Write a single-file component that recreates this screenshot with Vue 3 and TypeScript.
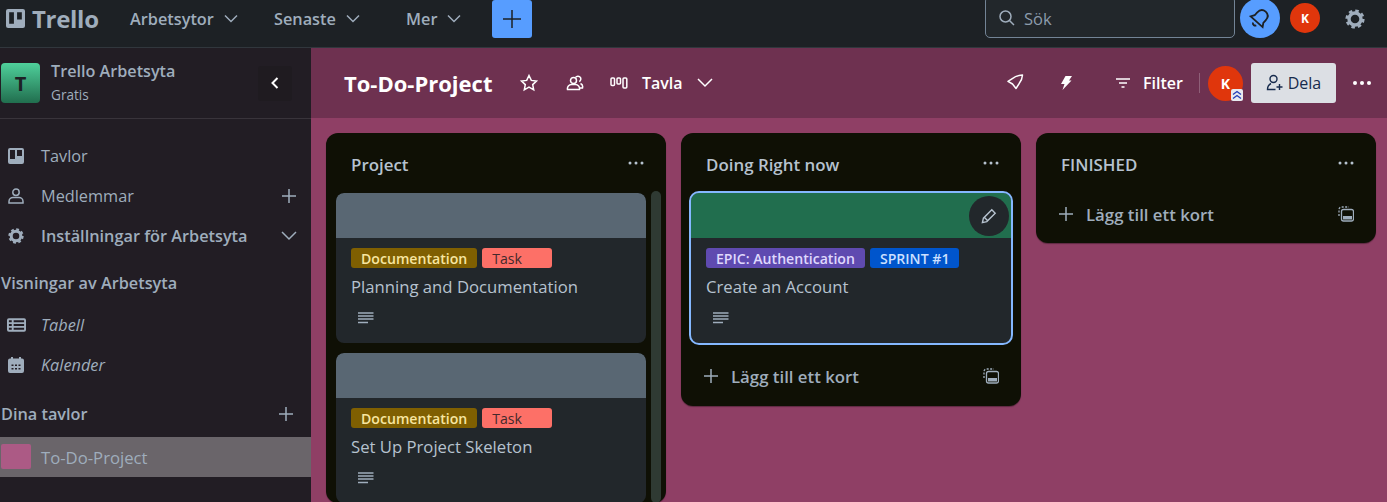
<script setup lang="ts">
interface Label {
  text: string
  kind: string
}

interface Card {
  title: string
  cover: string
  labels: Label[]
  active?: boolean
}

interface List {
  name: string
  cards: Card[]
  scroll?: boolean
  addRow: boolean
}

const lists: List[] = [
  {
    name: 'Project',
    scroll: true,
    addRow: false,
    cards: [
      {
        title: 'Planning and Documentation',
        cover: 'cover-grey',
        labels: [
          { text: 'Documentation', kind: 'docs' },
          { text: 'Task', kind: 'task' },
        ],
      },
      {
        title: 'Set Up Project Skeleton',
        cover: 'cover-grey',
        labels: [
          { text: 'Documentation', kind: 'docs' },
          { text: 'Task', kind: 'task' },
        ],
      },
    ],
  },
  {
    name: 'Doing Right now',
    addRow: true,
    cards: [
      {
        title: 'Create an Account',
        cover: 'cover-green',
        active: true,
        labels: [
          { text: 'EPIC: Authentication', kind: 'epic' },
          { text: 'SPRINT #1', kind: 'sprint' },
        ],
      },
    ],
  },
  { name: 'FINISHED', addRow: true, cards: [] },
]
</script>

<template>
  <div class="app">
    <header class="topbar">
      <div class="logo">
        <svg class="logo-mark" width="19" height="19" viewBox="0 0 18 18">
          <path fill-rule="evenodd" fill="#9fadbc" d="M2 0h14a2 2 0 0 1 2 2v14a2 2 0 0 1-2 2H2a2 2 0 0 1-2-2V2a2 2 0 0 1 2-2zm1 3v11h4.500V3zm7.500 0v7H15V3z" />
        </svg>
        <span>Trello</span>
      </div>
      <button class="menu menu-a">Arbetsytor
        <svg width="14" height="10" viewBox="0 0 14 10"><path d="M1 1.500l6 6 6-6" /></svg>
      </button>
      <button class="menu menu-b">Senaste
        <svg width="14" height="10" viewBox="0 0 14 10"><path d="M1 1.500l6 6 6-6" /></svg>
      </button>
      <button class="menu menu-c">Mer
        <svg width="14" height="10" viewBox="0 0 14 10"><path d="M1 1.500l6 6 6-6" /></svg>
      </button>
      <button class="create">
        <svg width="20" height="20" viewBox="0 0 20 20"><path d="M10 1v18M1 10h18" /></svg>
      </button>
      <div class="search">
        <svg width="18" height="18" viewBox="0 0 18 18"><circle cx="7.500" cy="7.500" r="5.500" /><path d="M11.500 11.500L16 16" /></svg>
        <span>Sök</span>
      </div>
      <button class="bell">
        <svg width="24" height="24" viewBox="0 0 24 24">
          <g transform="rotate(42 12 12)">
            <path d="M12 3.500c-3.800 0-5.800 2.800-5.800 6.500v3.500L4 17h16l-2.200-3.500V10c0-3.700-2-6.500-5.800-6.500z" />
            <path d="M9.800 20a2.400 2.400 0 0 0 4.400 0" />
          </g>
        </svg>
      </button>
      <div class="avatar avatar-top">K</div>
      <svg class="gear" width="20" height="20" viewBox="0 0 20 20">
        <circle cx="10" cy="10" r="6" fill="none" stroke="#9fadbc" stroke-width="3.400" />
        <circle cx="10" cy="10" r="8.300" fill="none" stroke="#9fadbc" stroke-width="2.600" stroke-dasharray="3.500 3.020" />
      </svg>
    </header>

    <div class="body">
      <aside class="sidebar">
        <div class="workspace">
          <div class="ws-logo">T</div>
          <div class="ws-text">
            <div class="ws-name">Trello Arbetsyta</div>
            <div class="ws-plan">Gratis</div>
          </div>
          <button class="collapse">
            <svg width="10" height="14" viewBox="0 0 10 14"><path d="M7.500 2L2.500 7l5 5" /></svg>
          </button>
        </div>

        <nav class="nav">
          <div class="row">
            <svg class="row-icon" width="16" height="16" viewBox="0 0 16 16">
              <path fill="#9fadbc" fill-rule="evenodd" d="M2 0h12a2 2 0 0 1 2 2v12a2 2 0 0 1-2 2H2a2 2 0 0 1-2-2V2a2 2 0 0 1 2-2zm0 2v9h5V2zm7 0v6h5V2z" />
            </svg>
            <span>Tavlor</span>
          </div>
          <div class="row">
            <svg class="row-icon line" width="16" height="16" viewBox="0 0 16 16">
              <circle cx="8" cy="4.200" r="3.200" />
              <path d="M1 15v-1.500c0-2.500 2-4 4-4h6c2 0 4 1.500 4 4V15z" />
            </svg>
            <span>Medlemmar</span>
            <svg class="row-end line" width="16" height="16" viewBox="0 0 16 16"><path d="M8 1v14M1 8h14" /></svg>
          </div>
          <div class="row strong">
            <svg class="row-icon" width="16" height="16" viewBox="0 0 20 20">
              <circle cx="10" cy="10" r="6" fill="none" stroke="#9fadbc" stroke-width="3.800" />
              <circle cx="10" cy="10" r="8.300" fill="none" stroke="#9fadbc" stroke-width="2.600" stroke-dasharray="3.500 3.020" />
            </svg>
            <span>Inställningar för Arbetsyta</span>
            <svg class="row-end line" width="16" height="16" viewBox="0 0 16 16"><path d="M1 4l7 7 7-7" /></svg>
          </div>

          <div class="heading views">Visningar av Arbetsyta</div>
          <div class="row italic">
            <svg class="row-icon row-icon-wide" width="19" height="14" viewBox="0 0 20 14">
              <path fill="#9fadbc" fill-rule="evenodd" d="M2 0h16a2 2 0 0 1 2 2v10a2 2 0 0 1-2 2H2a2 2 0 0 1-2-2V2a2 2 0 0 1 2-2zm0 2v2h3V2zm5 0v2h11V2zM2 6v2h3V6zm5 0v2h11V6zM2 10v2h3v-2zm5 0v2h11v-2z" />
            </svg>
            <span>Tabell</span>
          </div>
          <div class="row italic">
            <svg class="row-icon" width="16" height="16" viewBox="0 0 16 16">
              <path fill="#9fadbc" fill-rule="evenodd" d="M3 0h2v1.500h6V0h2v1.500h1a2 2 0 0 1 2 2V14a2 2 0 0 1-2 2H2a2 2 0 0 1-2-2V3.500a2 2 0 0 1 2-2h1zM3.500 7.500v1.500h2V7.500zm3.500 0v1.500h2V7.500zm3.500 0v1.500h2V7.500zm-7 3.500v1.500h2V11zm3.500 0v1.500h2V11zm3.500 0v1.500h2V11z" />
            </svg>
            <span>Kalender</span>
          </div>

          <div class="heading boards">
            <span>Dina tavlor</span>
            <svg class="row-end line" width="16" height="16" viewBox="0 0 16 16"><path d="M8 1v14M1 8h14" /></svg>
          </div>
          <div class="row board-row">
            <span class="swatch"></span>
            <span>To-Do-Project</span>
          </div>
        </nav>
      </aside>

      <main class="board">
        <div class="board-bar">
          <h1 class="board-title">To-Do-Project</h1>
          <svg class="bar-star bar-line" width="20" height="20" viewBox="0 0 20 20">
            <path d="M10 2.500l2.300 4.900 5.200.6-3.800 3.600 1 5.200L10 14.200l-4.700 2.600 1-5.200L2.500 8l5.200-.6z" />
          </svg>
          <svg class="bar-people bar-line" width="18" height="18" viewBox="0 0 18 18">
            <circle cx="7.500" cy="6.500" r="3" />
            <path d="M1.500 15.500c-.5-2.800 1.500-5 4-5h4c2.500 0 4.500 2.200 4 5zM9.500 3.500c1-1.800 4-1.800 5 .2.800 1.600-.2 3.300-1.300 3.800M14.500 9.500c1.700.8 2.500 2.500 2 4.500h-2.500" />
          </svg>
          <svg class="bar-view bar-line bar-view-icon" width="18" height="12" viewBox="0 0 18 12">
            <rect x="1" y="1" width="3.500" height="7.500" rx="1" />
            <rect x="7" y="1" width="3.500" height="6" rx="1" />
            <rect x="13" y="1" width="3.800" height="10" rx="1" />
          </svg>
          <span class="bar-tab">Tavla</span>
          <svg class="bar-chevron" width="18" height="12" viewBox="0 0 18 12"><path d="M2 2l7 7 7-7" /></svg>

          <svg class="bar-rocket bar-line" width="18" height="18" viewBox="0 0 18 18">
            <path d="M15.500 1c-3.500.3-6.500 1-9 2.800L1 7.300l4.500 2.700 3.500 4.500 3.300-5.200c2-2.500 3-5.300 3.200-8.300z" stroke-linejoin="round" />
          </svg>
          <svg class="bar-bolt" width="12" height="14" viewBox="0 0 12 14">
            <path fill="#fff" d="M5.500 0H12L9 4.500h2.500L2.500 14l2-6H1z" />
          </svg>
          <svg class="bar-filter bar-line" width="14" height="12" viewBox="0 0 14 12"><path d="M0 2h14M3 6h8M5.500 10h3" /></svg>
          <span class="bar-text">Filter</span>
          <span class="bar-divider"></span>
          <div class="avatar avatar-board">K
            <svg class="badge" width="12" height="12" viewBox="0 0 12 12">
              <rect width="12" height="12" rx="2" fill="#e8eaf0" />
              <path d="M2 5.500L6 2.500l4 3M2 9.500l4-3 4 3" fill="none" stroke="#2540b8" stroke-width="1.400" />
            </svg>
          </div>
          <button class="share">
            <svg width="18" height="18" viewBox="0 0 18 18">
              <circle cx="7.500" cy="5" r="3.500" />
              <path d="M5 9.500c-2 1-3.500 3.500-3.500 6h8M13.500 10v6M10.500 13h6" />
            </svg>
            Dela
          </button>
          <svg class="bar-more" width="20" height="6" viewBox="0 0 20 6">
            <circle cx="3" cy="3" r="2" /><circle cx="10" cy="3" r="2" /><circle cx="17" cy="3" r="2" />
          </svg>
        </div>

        <div class="canvas">
          <section v-for="list in lists" :key="list.name" class="list" :class="{ 'list-tall': list.scroll }">
            <div class="list-head">
              <span>{{ list.name }}</span>
              <svg width="18" height="6" viewBox="0 0 18 6">
                <circle cx="3" cy="3" r="1.500" /><circle cx="9" cy="3" r="1.500" /><circle cx="15" cy="3" r="1.500" />
              </svg>
            </div>
            <div v-if="list.cards.length" class="list-body">
              <div class="cards">
                <article v-for="card in list.cards" :key="card.title" class="card" :class="{ active: card.active }">
                  <div class="cover" :class="card.cover"></div>
                  <button v-if="card.active" class="edit">
                    <svg width="16" height="16" viewBox="0 0 16 16">
                      <path d="M10.800 1.800l3.400 3.400-8.400 8.400-4.400 1 1-4.400zM3.500 9.500l3 3" />
                    </svg>
                  </button>
                  <div class="card-body">
                    <div class="labels">
                      <span v-for="label in card.labels" :key="label.text" class="label" :class="label.kind">{{ label.text }}</span>
                    </div>
                    <div class="card-title">{{ card.title }}</div>
                    <svg class="desc" width="16" height="12" viewBox="0 0 16 12">
                      <path d="M0 1h15.500M0 4h15.500M0 7h15.500M0 10.500h10" />
                    </svg>
                  </div>
                </article>
              </div>
              <div v-if="list.scroll" class="scrollbar"></div>
            </div>
            <div v-if="list.addRow" class="add-row">
              <svg class="add-plus" width="16" height="16" viewBox="0 0 16 16"><path d="M8 1v14M1 8h14" /></svg>
              <span>Lägg till ett kort</span>
              <svg class="add-tpl" width="16" height="16" viewBox="0 0 16 16">
                <path d="M1 10V3.500A2.500 2.500 0 0 1 3.500 1H11" stroke-dasharray="2 1.500" />
                <rect x="3.500" y="3.500" width="12" height="11.500" rx="2" />
                <rect x="5" y="10" width="9" height="3.500" fill="#9fadbc" stroke="none" />
              </svg>
            </div>
          </section>
        </div>
      </main>
    </div>
  </div>
</template>

<style>
html,
body {
  margin: 0;
  overflow: hidden;
  background: #1d2125;
}
</style>

<style scoped>
.app {
  width: 1387px;
  height: 502px;
  display: flex;
  flex-direction: column;
  overflow: hidden;
  font-family: "Open Sans", "Noto Sans", sans-serif;
  color: #9fadbc;
}

button {
  font-family: inherit;
  border: none;
  padding: 0;
  background: none;
  color: inherit;
}

.topbar {
  box-sizing: border-box;
  flex: none;
  height: 48px;
  padding-bottom: 10px;
  display: flex;
  align-items: center;
  background: #1d2125;
  border-bottom: 1px solid #31373d;
  overflow: hidden;
}

.logo {
  width: 130px;
  padding-left: 6px;
  box-sizing: border-box;
  flex: none;
  display: flex;
  align-items: center;
  gap: 7px;
  font-size: 24px;
  font-weight: 700;
  letter-spacing: -0.3px;
}

.menu {
  display: flex;
  align-items: center;
  flex: none;
  gap: 10px;
  font-size: 16.300px;
  font-weight: 600;
  color: #9fadbc;
}

.menu svg,
.bar-chevron {
  fill: none;
  stroke: currentColor;
  stroke-width: 1.500;
}

.menu-a {
  width: 144px;
}

.menu-b {
  width: 132px;
}

.menu-c {
  width: 86px;
}

.create {
  width: 40px;
  height: 38px;
  flex: none;
  display: flex;
  align-items: center;
  justify-content: center;
  background: #579dff;
  border-radius: 3px;
}

.create svg {
  stroke: #1d2125;
  stroke-width: 1.500;
}

.search {
  box-sizing: border-box;
  width: 250px;
  height: 42px;
  margin-top: -4px;
  margin-left: auto;
  flex: none;
  display: flex;
  align-items: center;
  gap: 8px;
  padding: 3px 0 0 12px;
  background: #22272b;
  border: 1px solid #738496;
  border-radius: 5px;
  font-size: 16.500px;
  color: #8c9bab;
}

.search svg {
  fill: none;
  stroke: #9fadbc;
  stroke-width: 1.500;
}

.bell {
  width: 40px;
  height: 40px;
  margin-top: -2px;
  margin-left: 5px;
  flex: none;
  display: flex;
  align-items: center;
  justify-content: center;
  background: #579dff;
  border-radius: 50%;
}

.bell svg {
  fill: none;
  stroke: #1d2125;
  stroke-width: 1.800;
}

.avatar {
  flex: none;
  display: flex;
  align-items: center;
  justify-content: center;
  background: #e0360c;
  color: #fff;
  border-radius: 50%;
  font-weight: 700;
}

.avatar-top {
  width: 30px;
  height: 30px;
  margin-top: -1px;
  margin-left: 10px;
  font-size: 12px;
}

.gear {
  margin-left: 25px;
  margin-right: 22px;
  flex: none;
}

.body {
  flex: 1;
  min-height: 0;
  display: flex;
}

.sidebar {
  width: 311px;
  flex: none;
  background: #221d24;
}

.workspace {
  box-sizing: border-box;
  height: 71px;
  display: flex;
  align-items: center;
  padding-left: 1px;
  border-bottom: 1px solid #39343b;
}

.ws-logo {
  width: 39px;
  height: 40px;
  flex: none;
  display: flex;
  align-items: center;
  justify-content: center;
  border-radius: 4px;
  background: linear-gradient(#4fd09b, #216e4e);
  color: #1d2125;
  font-size: 20px;
  font-weight: 700;
}

.ws-text {
  margin-left: 11px;
  flex: 1;
}

.ws-name {
  font-size: 16.200px;
  font-weight: 600;
  line-height: 20px;
}

.ws-plan {
  font-size: 13.600px;
  line-height: 20px;
  margin-top: 4px;
}

.collapse {
  width: 34px;
  height: 35px;
  margin-right: 19px;
  display: flex;
  align-items: center;
  justify-content: center;
  background: #1f1b20;
  border-radius: 3px;
}

.collapse svg {
  fill: none;
  stroke: #fff;
  stroke-width: 2;
}

.nav {
  padding-top: 17px;
}

.row {
  height: 40px;
  display: flex;
  align-items: center;
  padding-left: 41px;
  position: relative;
  font-size: 16.300px;
}

.row-icon {
  position: absolute;
  left: 8px;
  top: 12px;
}

.row-icon-wide {
  left: 7px;
  top: 13px;
}

.line {
  fill: none;
  stroke: #9fadbc;
  stroke-width: 1.500;
}

.row-end {
  margin-left: auto;
  margin-right: 14px;
}

.strong {
  font-weight: 600;
}

.italic span {
  font-style: italic;
}

.heading {
  display: flex;
  align-items: center;
  padding-left: 1px;
  height: 22px;
  font-size: 16.300px;
  font-weight: 600;
}

.views {
  margin-top: 16px;
  margin-bottom: 11px;
}

.boards {
  margin-top: 18px;
  margin-bottom: 12px;
}

.boards .row-end {
  margin-right: 17px;
}

.board-row {
  background: #6a656a;
  font-size: 16.700px;
}

.swatch {
  position: absolute;
  left: 1px;
  top: 7px;
  width: 30px;
  height: 25px;
  background: #ac5a85;
  border-radius: 2px;
}

.board {
  flex: 1;
  min-width: 0;
  display: flex;
  flex-direction: column;
  background: #8f3f65;
}

.board-bar {
  box-sizing: border-box;
  height: 70px;
  flex: none;
  display: flex;
  align-items: center;
  padding-left: 33px;
  background: #6e3150;
  color: #fff;
}

.board-title {
  margin: 0;
  font-size: 22px;
  font-weight: 700;
  width: 175px;
  white-space: nowrap;
}

.bar-line {
  fill: none;
  stroke: #fff;
  stroke-width: 1.500;
  flex: none;
}

.bar-people {
  margin-left: 27px;
}

.bar-view {
  margin-left: 26px;
  flex: none;
}

.bar-tab {
  margin-left: 14px;
  font-size: 16px;
  font-weight: 600;
}

.bar-chevron {
  margin-left: 13px;
  flex: none;
}

.bar-rocket {
  margin-left: auto;
}

.bar-bolt {
  margin-left: 35px;
  flex: none;
}

.bar-filter {
  margin-left: 44px;
}

.bar-text {
  margin-left: 13px;
  font-size: 16px;
  font-weight: 600;
}

.bar-divider {
  width: 1px;
  height: 20px;
  margin-left: 16px;
  background: #8e5f78;
}

.avatar-board {
  position: relative;
  width: 35px;
  height: 35px;
  margin-left: 8px;
  font-size: 14px;
}

.badge {
  position: absolute;
  right: 0;
  bottom: 0;
}

.share {
  width: 85px;
  height: 40px;
  margin-left: 8px;
  flex: none;
  display: flex;
  align-items: center;
  justify-content: center;
  gap: 4px;
  background: #dcdfe4;
  border-radius: 3px;
  color: #172b4d;
  font-size: 16px;
}

.share svg {
  fill: none;
  stroke: #172b4d;
  stroke-width: 1.400;
}

.bar-more {
  margin-left: 16px;
  margin-right: 15px;
  fill: #fff;
  flex: none;
}

.canvas {
  flex: 1;
  min-height: 0;
  display: flex;
  align-items: flex-start;
  gap: 15px;
  padding: 15px 0 0 15px;
  overflow: hidden;
}

.list {
  box-sizing: border-box;
  width: 340px;
  flex: none;
  background: #0f1005;
  border-radius: 12px;
  box-shadow: 0 1px 1px rgba(0, 0, 0, 0.35);
  padding-bottom: 6px;
}

.list-tall {
  padding-bottom: 0;
}

.list-head {
  height: 58px;
  box-sizing: border-box;
  padding: 4px 21px 0 25px;
  display: flex;
  align-items: center;
  justify-content: space-between;
  font-size: 16.900px;
  font-weight: 600;
  color: #b6c2cf;
}

.list-head svg {
  fill: #b6c2cf;
  margin-top: -3px;
}

.list-body {
  display: flex;
  gap: 5px;
  padding: 0 10px;
}

.list-tall .list-body {
  padding-right: 5px;
}

.cards {
  flex: 1;
  min-width: 0;
  display: flex;
  flex-direction: column;
  gap: 10px;
  padding-top: 2px;
}

.scrollbar {
  width: 10px;
  flex: none;
  background: #2f3a33;
  border-radius: 5px;
}

.card {
  position: relative;
  height: 150px;
  flex: none;
  background: #22272b;
  border-radius: 8px;
  overflow: hidden;
}

.card.active {
  overflow: visible;
  outline: 2px solid #85b8ff;
}

.cover {
  height: 45px;
  border-radius: 8px 8px 0 0;
}

.cover-grey {
  background: #596773;
}

.cover-green {
  background: #216e4e;
}

.edit {
  position: absolute;
  top: 3px;
  right: 2px;
  width: 40px;
  height: 40px;
  display: flex;
  align-items: center;
  justify-content: center;
  background: #22272b;
  border-radius: 50%;
}

.edit svg {
  fill: none;
  stroke: #b6c2cf;
  stroke-width: 1.400;
}

.card-body {
  padding: 10px 15px 0;
}

.labels {
  display: flex;
  gap: 5px;
}

.label {
  box-sizing: border-box;
  height: 20px;
  padding: 0 10px;
  display: flex;
  align-items: center;
  border-radius: 3px;
  font-size: 14.100px;
  font-weight: 600;
  white-space: nowrap;
}

.docs {
  background: #7f5f01;
  color: #f8e6a0;
}

.task {
  min-width: 70px;
  background: #fd7067;
  color: #44292b;
  font-weight: 400;
}

.epic {
  background: #5f4ab0;
  color: #dfd8fd;
}

.sprint {
  background: #0055cc;
  color: #cce0ff;
}

.card-title {
  margin-top: 8px;
  font-size: 16.700px;
  line-height: 22px;
  color: #b6c2cf;
}

.desc {
  display: block;
  margin: 14px 0 0 7px;
  stroke: #9fadbc;
  stroke-width: 1.400;
  fill: none;
}

.add-row {
  height: 46px;
  display: flex;
  align-items: center;
  padding: 0 22px;
  font-size: 16.800px;
  font-weight: 600;
  color: #9fadbc;
}

.list-body + .add-row {
  margin-top: 10px;
  margin-bottom: 1px;
}

.add-plus {
  stroke: #9fadbc;
  stroke-width: 1.500;
  fill: none;
  margin-right: 12px;
}

.add-tpl {
  margin-left: auto;
  stroke: #9fadbc;
  stroke-width: 1.300;
  fill: none;
}
</style>
